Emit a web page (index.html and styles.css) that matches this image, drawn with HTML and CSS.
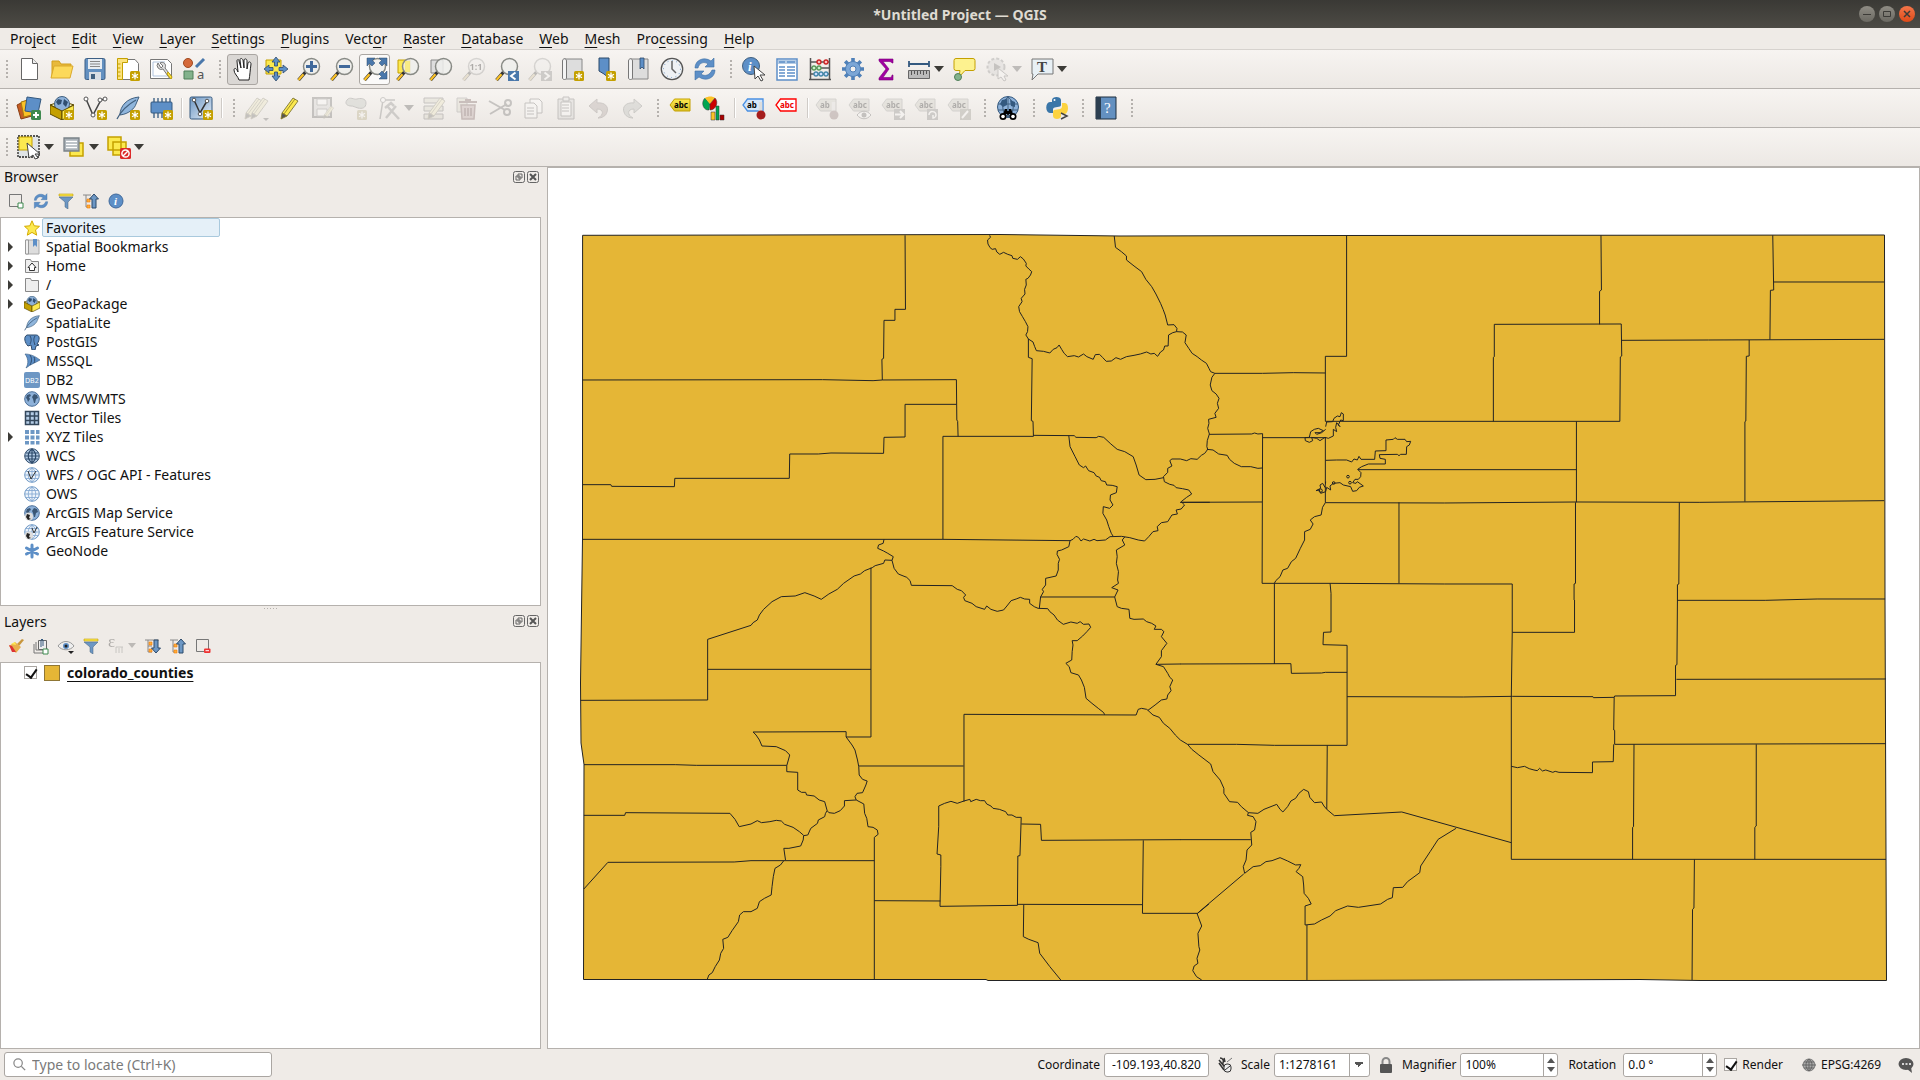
FILE: index.html
```html
<!DOCTYPE html>
<html lang="en">
<head>
<meta charset="utf-8">
<title>*Untitled Project — QGIS</title>
<link rel="stylesheet" href="styles.css">
</head>
<body>
<svg class="defs" aria-hidden="true">
  <defs>
    <linearGradient id="g-blue" x1="0" y1="0" x2="1" y2="1"><stop offset="0" stop-color="#6d97c4"/><stop offset="1" stop-color="#e4edf6"/></linearGradient>
    <linearGradient id="g-tag" x1="0" y1="0" x2="0" y2="1"><stop offset="0" stop-color="#fce94f"/><stop offset="1" stop-color="#d9c22a"/></linearGradient>
  </defs>
  <symbol id="new" viewBox="0 0 10 10"><rect width="10" height="10" rx="1.5" fill="#c4a000"/><path d="M5 1.5v7M2 3.2l6 3.6M8 3.2L2 6.8" stroke="#fff" stroke-width="1.3"/></symbol>
  <symbol id="lens" viewBox="0 0 24 24"><path d="M1.500 23l7-8" stroke="#333" stroke-width="3.400"/><path d="M1.500 23l5-5.700" stroke="#fcc226" stroke-width="2.200"/><circle cx="14.500" cy="9.500" r="8" fill="#eeeeec" fill-opacity=".85" stroke="#888a85" stroke-width="1.500"/></symbol>
  <symbol id="sync" viewBox="0 0 24 24"><path d="M2 11C2 3 11-1 18 4l3-3v9h-9l3-3C11 4 6 6 5 11zM22 13c0 8-9 12-16 7l-4 3v-9h9l-3 3c4 3 9 1 11-4z" fill="#5d8fc7" stroke="#3c6ea5" stroke-width=".6"/></symbol>
  <symbol id="pencil" viewBox="0 0 24 24"><path d="M15 2l5 3L9 20l-5-3z" fill="#fce94f" stroke="#888040"/><path d="M17 3L6 18M4 17l-1 6 6-3z" fill="#555" stroke="#8a7a20" stroke-width=".8"/></symbol>
  <symbol id="tag" viewBox="0 0 24 24"><path d="M5.500 3H21v12H5.500L1 9z"/></symbol>
  <symbol id="globe" viewBox="0 0 16 16"><circle cx="8" cy="8" r="7.300" fill="#8db1d9" stroke="#4b6f99"/><path d="M3 4l3-1 1 2-2 1 1 2-2 3-1-3-1-1zM10 3l3 1 1 3-2 1-1 4-1 0-1-4-1-2z" fill="#3a5674"/></symbol>
  <symbol id="grid-globe" viewBox="0 0 16 16"><circle cx="8" cy="8" r="7.300" fill="#edf4fb" stroke="#6d97c4"/><path d="M1 8h14M8 1v14M2 4.500h12M2 11.500h12M8 1C3 4 3 12 8 15M8 1c5 3 5 11 0 14" fill="none" stroke="#7fa5d0" stroke-width=".8"/></symbol>
  <symbol id="feather" viewBox="0 0 24 24"><path d="M23 1C11 2 4 10 4 19c9-1 15-7 16-11z" fill="#8fb5dc" stroke="#41607f"/><path d="M1 23C5 15 11 9 20 4" fill="none" stroke="#41607f" stroke-width="1.300"/></symbol>
  <symbol id="box" viewBox="0 0 24 24"><path d="M0 9l12-4 12 4-12 5z" fill="#fdf6b8" stroke="#5c4a00"/><circle cx="12" cy="8" r="7.500" fill="#8db1d9" stroke="#41607f"/><path d="M8 3l4 1-1 4-3 1-2-3zM14 3l4 3-2 5-3-3z" fill="#304f70"/><path d="M0 9l12 6v9L0 18z" fill="#c4a000" stroke="#5c4a00"/><path d="M24 9l-12 6v9l12-6z" fill="#fce94f" stroke="#5c4a00"/></symbol>
  <symbol id="funnel" viewBox="0 0 16 16"><path d="M1 1h14v2H1z" fill="#fce94f" stroke="#c4a000" stroke-width=".6"/><path d="M1 4h14l-5 5v7l-3-2V9z" fill="#6d97c4" stroke="#41607f" stroke-width=".5"/></symbol>
  <symbol id="tree-up" viewBox="0 0 16 16"><path d="M0 2h8M3 2v12h4M3 8h4" fill="none" stroke="#888"/><path d="M4 6h3v3H4zM4 12h3v3H4z" fill="#fcaf3e" stroke="#f57900" stroke-width=".6"/><path d="M11 1l4.500 5H13v9H9V6H6.500z" fill="#6d97c4" stroke="#2d4a6b"/></symbol>
  <symbol id="tree-down" viewBox="0 0 16 16"><path d="M0 2h14M3 2v12h4M3 8h4" fill="none" stroke="#888"/><path d="M4 4h3v3H4zM4 11h3v3H4z" fill="#fcaf3e" stroke="#f57900" stroke-width=".6"/><path d="M11 15l4.500-5H13V2H9v8H6.500z" fill="#6d97c4" stroke="#2d4a6b"/></symbol>
  <symbol id="float" viewBox="0 0 12 12"><rect x=".5" y=".5" width="11" height="11" rx="2" fill="none" stroke="#666"/><path d="M5 3h4v4H5zM3 5h4v4H3z" fill="#efebe7" stroke="#666"/></symbol>
  <symbol id="close" viewBox="0 0 12 12"><rect x=".5" y=".5" width="11" height="11" rx="2" fill="none" stroke="#666"/><path d="M3 3l6 6M9 3l-6 6" stroke="#555" stroke-width="2"/></symbol>
</svg>

<header class="titlebar">
  <h1>*Untitled Project — QGIS</h1>
  <div class="window-buttons">
    <button type="button" aria-label="Minimize"><svg viewBox="0 0 16 16"><path d="M4 8.500h8" stroke="#3c3b37"/></svg></button>
    <button type="button" aria-label="Maximize"><svg viewBox="0 0 16 16"><path d="M4.500 5.500h7v5h-7z" fill="none" stroke="#3c3b37"/></svg></button>
    <button type="button" class="quit" aria-label="Close"><svg viewBox="0 0 16 16"><path d="M5 5l6 6M11 5l-6 6" stroke="#3c3b37" stroke-width="1.500"/></svg></button>
  </div>
</header>

<nav class="menubar">
  <button type="button">Pro<u>j</u>ect</button><button type="button"><u>E</u>dit</button><button type="button"><u>V</u>iew</button><button type="button"><u>L</u>ayer</button><button type="button"><u>S</u>ettings</button><button type="button"><u>P</u>lugins</button><button type="button">Vect<u>o</u>r</button><button type="button"><u>R</u>aster</button><button type="button"><u>D</u>atabase</button><button type="button"><u>W</u>eb</button><button type="button"><u>M</u>esh</button><button type="button">Pro<u>c</u>essing</button><button type="button"><u>H</u>elp</button>
</nav>

<div class="toolbar" role="toolbar" aria-label="Project and navigation">
  <i class="handle"></i>
  <button type="button" aria-label="New project"><svg viewBox="0 0 24 24"><path d="M4.500 1.500h11l5 5v16h-16z" fill="#fff" stroke="#666"/><path d="M15.500 1.500v5h5" fill="#eee" stroke="#666"/></svg></button>
  <button type="button" aria-label="Open project"><svg viewBox="0 0 24 24"><path d="M2 21V4h7l2 3h10v3" fill="#e8b93b" stroke="#d19f1c"/><path d="M4 9h19l-3 12H1z" fill="#fcd95a" stroke="#dba92a"/></svg></button>
  <button type="button" aria-label="Save project"><svg viewBox="0 0 24 24"><rect x="2" y="1.500" width="20" height="21" rx="1.500" fill="#6390c0" stroke="#3d5f85"/><path d="M5 2h14v10H5z" fill="#e8edf2"/><path d="M7 4.500h10M7 7h10M7 9.500h10" stroke="#888"/><path d="M6 15h12v8H6z" fill="#d9dee4"/><path d="M8 17h4v5H8z" fill="#41607f"/></svg></button>
  <button type="button" aria-label="New print layout"><svg viewBox="0 0 24 24"><path d="M6 2.500h13l3.500 4v16H6z" fill="#fff" stroke="#777"/><path d="M1.500 1.500h10v4h-5v17h-5z" fill="#fce27c" stroke="#c4a000"/><path d="M1.500 7h3M1.500 11h3M1.500 15h3M1.500 19h3" stroke="#c4a000"/><use href="#new" x="14" y="14" width="10" height="10"/></svg></button>
  <button type="button" aria-label="Layout manager"><svg viewBox="0 0 24 24"><path d="M1.500 2.500h17l4 4v15h-21z" fill="#fff" stroke="#777"/><path d="M4 5h12M4 5v14h14" fill="none" stroke="#b0c4de"/><path d="M9 6a4 4 0 0 0 5 6l7 10 2-2-7-9c2-4-2-7-5-5l3 3-2 2z" fill="#ddd" stroke="#777"/><path d="M18 17l4 5 1-2-4-5z" fill="#fce94f" stroke="#c4a000"/></svg></button>
  <button type="button" aria-label="Style manager"><svg viewBox="0 0 24 24"><circle cx="6" cy="6" r="4.500" fill="#d5693a" stroke="#a04a20"/><path d="M14 10l8-8" stroke="#4a78ab" stroke-width="3"/><path d="M2 14h9v8H2z" fill="#83b28c" stroke="#4f7f58"/><text x="15" y="22" font-size="13" fill="#555">a</text></svg></button>
  <i class="handle"></i>
  <button type="button" class="pressed" aria-label="Pan map"><svg viewBox="0 0 24 24"><path d="M8 23c-1-4-5-6-5-10 0-2 2-2 3 0l1 2L6 4c0-2 2-2 2 0l2 7-1-8c0-2 2-2 3 0l1 8 0-8c1-2 3-1 3 1v8l1-6c1-2 3-1 3 1-1 7-1 11-2 16z" fill="#fff" stroke="#222"/></svg></button>
  <button type="button" aria-label="Pan to selection"><svg viewBox="0 0 24 24"><path d="M2 3h15v14H2z" fill="#fce94f" stroke="#c4a000"/><path d="M12 0l4 5h-2.500v4h-3V5H8zM12 24l4-5h-2.500v-4h-3v4H8zM0 12l5-4v2.500h4v3H5V16zM24 12l-5-4v2.500h-4v3h4V16z" fill="#5d8fc7" stroke="#2d4a6b" stroke-width=".8"/></svg></button>
  <button type="button" aria-label="Zoom in"><svg viewBox="0 0 24 24"><use href="#lens"/><path d="M14.500 4v11M9 9.500h11" stroke="#41699b" stroke-width="3"/></svg></button>
  <button type="button" aria-label="Zoom out"><svg viewBox="0 0 24 24"><use href="#lens"/><path d="M9 9.500h11" stroke="#41699b" stroke-width="3"/></svg></button>
  <button type="button" class="framed" aria-label="Zoom full"><svg viewBox="0 0 24 24"><use href="#lens"/><path d="M4 1h8L9.500 3.500 12 6l-3 3-2.500-2.500L4 9zM24 1h-8l2.500 2.500L16 6l3 3 2.500-2.500L24 9zM24 22h-8l2.500-2.500L16 17l3-3 2.500 2.500L24 14z" fill="#4a78ab" stroke="#2d4a6b" stroke-width=".5"/></svg></button>
  <button type="button" aria-label="Zoom to selection"><svg viewBox="0 0 24 24"><path d="M2 3h12v13H2z" fill="#fce94f" stroke="#c4a000"/><use href="#lens"/><path d="M9 4h5v11H9z" fill="#fce94f" opacity=".6"/></svg></button>
  <button type="button" aria-label="Zoom to layer"><svg viewBox="0 0 24 24"><path d="M2 3h12v13H2z" fill="#ddd" stroke="#888"/><use href="#lens"/></svg></button>
  <button type="button" disabled aria-label="Zoom native"><svg viewBox="0 0 24 24"><use href="#lens"/><text x="7.500" y="13" font-size="9" font-weight="700">1:1</text></svg></button>
  <button type="button" aria-label="Zoom last"><svg viewBox="0 0 24 24"><use href="#lens"/><path d="M13 14h11v10H13z" fill="#4a78ab"/><path d="M20.500 15.500L16 19l4.500 3.500" stroke="#fff" stroke-width="2" fill="none"/></svg></button>
  <button type="button" disabled aria-label="Zoom next"><svg viewBox="0 0 24 24"><use href="#lens"/><path d="M13 14h11v10H13z" fill="#777"/><path d="M16.500 15.500L21 19l-4.500 3.500" stroke="#fff" stroke-width="2" fill="none"/></svg></button>
  <button type="button" aria-label="New map view"><svg viewBox="0 0 24 24"><path d="M3 2h18v20H5" fill="#ddd" stroke="#888"/><path d="M1.500 4c0-3 4-3 4 0v17c0 2-4 2-4 0z" fill="#f4f4f4" stroke="#777"/><use href="#new" x="13" y="14" width="10" height="10"/></svg></button>
  <button type="button" aria-label="New bookmark"><svg viewBox="0 0 24 24"><path d="M5 1h10v20l-5-4-5-3z" fill="#5d8fc7" stroke="#2d4a6b"/><use href="#new" x="12" y="14" width="10" height="10"/></svg></button>
  <button type="button" aria-label="Show bookmarks"><svg viewBox="0 0 24 24"><path d="M3 2h18v20H5" fill="#ddd" stroke="#888"/><path d="M1.500 4c0-3 4-3 4 0v17c0 2-4 2-4 0z" fill="#f4f4f4" stroke="#777"/><path d="M13 1h4v11l-2-2-2 2z" fill="#5d8fc7" stroke="#2d4a6b" stroke-width=".8"/></svg></button>
  <button type="button" aria-label="Temporal controller"><svg viewBox="0 0 24 24"><circle cx="12" cy="12" r="10.700" fill="#eef1f4" stroke="#555" stroke-width="1.300"/><circle cx="12" cy="12" r="8.500" fill="none" stroke="#6d97c4" stroke-dasharray="1 3.400"/><path d="M12 4v8l4 4" fill="none" stroke="#666" stroke-width="1.500"/></svg></button>
  <button type="button" aria-label="Refresh"><svg viewBox="0 0 24 24"><use href="#sync"/></svg></button>
  <i class="handle"></i>
  <button type="button" aria-label="Identify"><svg viewBox="0 0 24 24"><circle cx="9" cy="9" r="8.500" fill="#5d8fc7" stroke="#41607f"/><text x="6" y="14" font-size="13" font-weight="700" font-style="italic" class="serif" fill="#fff">i</text><path d="M12 9l11 9-5 0 3 5-2 1-3-5-3 3z" fill="#fff" stroke="#444"/></svg></button>
  <button type="button" aria-label="Attribute table"><svg viewBox="0 0 24 24"><path d="M2 2h20v21H2z" fill="#fff" stroke="#5d8fc7" stroke-width="1.500"/><path d="M3 3h18v4H3z" fill="#b4cce6"/><path d="M4 10h6M12 10h8M4 13h6M12 13h8M4 16h6M12 16h8M4 19h6M12 19h8M4 5h6M12 5h8" stroke="#5d8fc7" stroke-width="1.500"/></svg></button>
  <button type="button" aria-label="Field calculator"><svg viewBox="0 0 24 24"><path d="M2.500 1v22M21.500 1v22M1 22.500h22M2 5h20M2 11h20M2 17h20" stroke="#555" stroke-width="1.500"/><g stroke-width="1.300"><g fill="#fbb" stroke="#c22"><circle cx="11" cy="5" r="2"/><circle cx="18" cy="5" r="2"/></g><g fill="#cec" stroke="#5a9a5a"><circle cx="6" cy="11" r="2"/><circle cx="11" cy="11" r="2"/></g><g fill="#cdf" stroke="#48a"><circle cx="8" cy="17" r="2"/><circle cx="13" cy="17" r="2"/><circle cx="18" cy="17" r="2"/></g></g></svg></button>
  <button type="button" aria-label="Toolbox"><svg viewBox="0 0 24 24"><path d="M12 1v22M1 12h22M4.200 4.200l15.600 15.600M19.800 4.200L4.200 19.800" stroke="#4f80b8" stroke-width="3.600"/><circle cx="12" cy="12" r="7.500" fill="#7ba6d6" stroke="#4f80b8"/><circle cx="12" cy="12" r="3" fill="#f4f1ee" stroke="#4f80b8"/></svg></button>
  <button type="button" aria-label="Statistics"><svg viewBox="0 0 24 24"><path d="M19 6V2H5v2l7 8-7 9v2h14v-5h-1c0 2-1 2.500-3 2.500H9l6-8.500-6-7.500h6c2 0 2.500 1 3 1.500z" fill="#a000a0" stroke="#7a007a" stroke-width=".6"/></svg></button>
  <button type="button" class="split" aria-label="Measure"><svg viewBox="0 0 24 24"><path d="M2 7h20M2 4v6M22 4v6" stroke="#34597f" stroke-width="1.800"/><path d="M1.500 13.500h21v8h-21z" fill="#bbb" stroke="#666"/><path d="M4.500 14v4M7.500 14v3M10.500 14v4M13.500 14v3M16.500 14v4M19.500 14v3" stroke="#555"/></svg><i class="arrow"></i></button>
  <button type="button" aria-label="Map tips"><svg viewBox="0 0 24 24"><path d="M4 1.500h17q2 0 2 2v8q0 2-2 2h-8L7 20l1-6.500H4q-2 0-2-2v-8q0-2 2-2z" fill="#fdf28f" stroke="#c4a000"/><circle cx="6" cy="20" r="3.500" fill="#83b28c" stroke="#4f7f58"/></svg></button>
  <button type="button" class="split" disabled aria-label="Run action"><svg viewBox="0 0 24 24"><circle cx="11" cy="10" r="8.500" fill="#ccc" stroke="#777" stroke-width="2" stroke-dasharray="3 2"/><path d="M9 6l7 4-7 4z" fill="#555"/><path d="M13 11l10 8h-4l2 4-2 1-3-4-3 2z" fill="#fff" stroke="#666"/></svg><i class="arrow"></i></button>
  <button type="button" class="split" aria-label="Text annotation"><svg viewBox="0 0 24 24"><path d="M2 2h21v15H8l-6 6 1-6H2z" fill="#e8f0f5" stroke="#777"/><text x="7" y="15" font-size="15" font-weight="700" class="serif" fill="#444">T</text></svg><i class="arrow"></i></button>
</div>

<div class="toolbar" role="toolbar" aria-label="Data sources and editing">
  <i class="handle"></i>
  <button type="button" aria-label="Data source manager"><svg viewBox="0 0 24 24"><path d="M0 9l10-5 5 16-11 3z" fill="#c65d22" stroke="#8a3d12"/><path d="M4 6l11-3 3 15-11 3z" fill="#fcc226" stroke="#a87c10"/><path d="M10 1l14 2-3 14-13-2z" fill="#5d8fc7" stroke="#34597f"/><rect x="14" y="14" width="10" height="10" rx="1.500" fill="#3f8a4f"/><path d="M19 16v6M16 19h6" stroke="#fff" stroke-width="2"/></svg></button>
  <button type="button" aria-label="New GeoPackage"><svg viewBox="0 0 24 24"><use href="#box"/><use href="#new" x="14" y="14" width="10" height="10"/></svg></button>
  <button type="button" aria-label="New shapefile"><svg viewBox="0 0 24 24"><path d="M3 3l7 16L18 4l4-1" fill="none" stroke="#444" stroke-width="1.500"/><g fill="#fff" stroke="#555"><circle cx="3" cy="3" r="2"/><circle cx="10" cy="19" r="2"/><circle cx="17" cy="4" r="2"/><circle cx="22" cy="3" r="2"/></g><use href="#new" x="14" y="14" width="10" height="10"/></svg></button>
  <button type="button" aria-label="New SpatiaLite"><svg viewBox="0 0 24 24"><use href="#feather"/><use href="#new" x="14" y="14" width="10" height="10"/></svg></button>
  <button type="button" aria-label="New memory layer"><svg viewBox="0 0 24 24"><path d="M5 2v20M9 2v20M13 2v20M17 2v20M21 2v10" stroke="#34597f" stroke-width="1.300"/><rect x="2" y="6" width="21" height="11" rx="1" fill="#5d8fc7" stroke="#34597f"/><use href="#new" x="14" y="14" width="10" height="10"/></svg></button>
  <i class="sep"></i>
  <button type="button" aria-label="New virtual layer"><svg viewBox="0 0 24 24"><rect x="1" y="1" width="22" height="22" rx="1.500" fill="url(#g-blue)" stroke="#34597f"/><path d="M5 4l6 13 7-12" fill="none" stroke="#333" stroke-width="1.500"/><g fill="#fff" stroke="#555"><circle cx="5" cy="4" r="1.800"/><circle cx="11" cy="18" r="1.800"/><circle cx="18" cy="5" r="1.800"/></g><use href="#new" x="14" y="14" width="10" height="10"/></svg></button>
  <i class="sep"></i>
  <i class="handle"></i>
  <button type="button" disabled aria-label="Current edits"><svg viewBox="0 0 24 24"><use href="#pencil" x="-3" width="24" height="24"/><use href="#pencil" x="3" width="24" height="24"/><path d="M18 22h6l-3 3z" fill="#555"/></svg></button>
  <button type="button" aria-label="Toggle editing"><svg viewBox="0 0 24 24"><use href="#pencil"/></svg></button>
  <button type="button" disabled aria-label="Save edits"><svg viewBox="0 0 24 24"><path d="M2 2h18v19H2z" fill="#ccc" stroke="#555" stroke-width="2"/><path d="M6 3h10v6H6zM6 13h10v7H6z" fill="#fff" stroke="#777"/><use href="#pencil" x="11" y="9" width="14" height="14"/></svg></button>
  <button type="button" disabled aria-label="Add feature"><svg viewBox="0 0 24 24"><path d="M3 4c3-4 7 0 10-1s9-1 9 4-4 6-8 5-4-2-7-2-7-2-4-6z" fill="#a8bfa8" stroke="#666"/><use href="#new" x="13" y="14" width="10" height="10"/></svg></button>
  <button type="button" class="split" disabled aria-label="Vertex tool"><svg viewBox="0 0 24 24"><path d="M3 23L6 4h12M6 4l-3 0" fill="none" stroke="#666" stroke-width="1.500"/><circle cx="6" cy="4" r="2.500" fill="#fff" stroke="#666"/><path d="M9 22L19 10M10 10l12 13M8 12l6-5 3 3" stroke="#777" stroke-width="2.500" fill="none"/></svg><i class="arrow"></i></button>
  <button type="button" disabled aria-label="Modify attributes"><svg viewBox="0 0 24 24"><path d="M2 2h19v5H2zM2 10h19v5H2zM2 18h19v5H2z" fill="#d8d4a0" stroke="#555"/><use href="#pencil" x="3" width="24" height="24"/></svg></button>
  <button type="button" disabled aria-label="Delete selected"><svg viewBox="0 0 24 24"><path d="M2 2h10v14H2z" fill="#d8d4a0" stroke="#777"/><path d="M6 9h14l-1 14H7z" fill="#d88" stroke="#933" stroke-width="1.500"/><path d="M4 6h18M10 4h6M10 12v8M13 12v8M16 12v8" stroke="#933" stroke-width="2"/></svg></button>
  <button type="button" disabled aria-label="Cut"><svg viewBox="0 0 24 24"><path d="M1 5l16 9M2 18l17-10" stroke="#555" stroke-width="2"/><circle cx="20" cy="7" r="3" fill="none" stroke="#555" stroke-width="2"/><circle cx="19" cy="16" r="3" fill="none" stroke="#555" stroke-width="2"/></svg></button>
  <button type="button" disabled aria-label="Copy"><svg viewBox="0 0 24 24"><path d="M9 3h9l3 3v11H9z" fill="#fff" stroke="#555"/><path d="M4 7h9l3 3v12H4z" fill="#fff" stroke="#555"/><path d="M6 12h7M6 15h7M6 18h7" stroke="#555"/></svg></button>
  <button type="button" disabled aria-label="Paste"><svg viewBox="0 0 24 24"><path d="M4 3h16v20H4z" fill="#ccc" stroke="#555"/><path d="M7 6h10v14H7z" fill="#fff" stroke="#555"/><path d="M9 1h6v4H9z" fill="#ddd" stroke="#555"/><path d="M8 9h7M8 12h7M8 15h7" stroke="#555"/></svg></button>
  <button type="button" disabled aria-label="Undo"><svg viewBox="0 0 24 24"><path d="M2 10l8-7v4c8-1 12 4 10 9-1 4-5 6-9 6 6-3 6-9-1-9v4z" fill="#b78c82" stroke="#7b6660"/></svg></button>
  <button type="button" disabled aria-label="Redo"><svg viewBox="0 0 24 24"><path d="M22 10l-8-7v4C6 6 2 11 4 16c1 4 5 6 9 6-6-3-6-9 1-9v4z" fill="#a5b3a5" stroke="#667066"/></svg></button>
  <i class="handle"></i>
  <button type="button" aria-label="Layer labeling"><svg viewBox="0 0 24 24"><use href="#tag" fill="url(#g-tag)" stroke="#c4a000"/><text x="5" y="12" font-size="8" font-weight="700">abc</text></svg></button>
  <button type="button" aria-label="Layer diagrams"><svg viewBox="0 0 24 24"><path d="M8 8L3 2c-5 5-1 13 4 12z" fill="#00a651" stroke="#333" stroke-width=".5"/><path d="M8 8L3 2c3-2 8-2 10 0z" fill="#fcc226"/><path d="M8 8l5-6c4 4 1 12-5 12z" fill="#c00" stroke="#333" stroke-width=".5"/><path d="M9 16h4v8H9z" fill="#fcc226" stroke="#333" stroke-width=".5"/><path d="M14 10h3v14h-3z" fill="#00a651" stroke="#333" stroke-width=".5"/><path d="M18 19h4v5h-4z" fill="#a00" stroke="#333" stroke-width=".5"/></svg></button>
  <i class="sep"></i>
  <button type="button" aria-label="Highlight pinned labels"><svg viewBox="0 0 24 24"><use href="#tag" fill="#d5e6fa" stroke="#4a90e2" stroke-width="1.300"/><text x="5" y="12" font-size="8" font-weight="700">ab</text><path d="M18.500 6v12" stroke="#ddd" stroke-width="3.500"/><circle cx="19" cy="19" r="4.500" fill="#a51d1d"/></svg></button>
  <button type="button" aria-label="Unplaced labels"><svg viewBox="0 0 24 24"><use href="#tag" fill="#fff" stroke="#f00" stroke-width="1.300"/><text x="5" y="12" font-size="8" font-weight="700" fill="#e00">abc</text></svg></button>
  <i class="sep"></i>
  <button type="button" disabled aria-label="Pin labels"><svg viewBox="0 0 24 24"><use href="#tag" fill="#c8c4a0" stroke="#888"/><text x="5" y="12" font-size="8" font-weight="700">ab</text><path d="M18.500 6v12" stroke="#ddd" stroke-width="3.500"/><circle cx="19" cy="19" r="4.500" fill="#a55"/></svg></button>
  <button type="button" disabled aria-label="Show labels"><svg viewBox="0 0 24 24"><use href="#tag" fill="#c8c4a0" stroke="#888"/><text x="5" y="12" font-size="8" font-weight="700">abc</text><path d="M9 19c4-5 10-5 14 0-4 5-10 5-14 0z" fill="#fff" stroke="#555"/><circle cx="16" cy="19" r="2.500" fill="#555"/></svg></button>
  <button type="button" disabled aria-label="Move label"><svg viewBox="0 0 24 24"><use href="#tag" fill="#c8c4a0" stroke="#888"/><text x="5" y="12" font-size="8" font-weight="700">abc</text><path d="M13 13h11v11H13z" fill="#777"/><path d="M14 18.500h8M19 15l3.500 3.500L19 22" stroke="#fff" stroke-width="2" fill="none"/></svg></button>
  <button type="button" disabled aria-label="Rotate label"><svg viewBox="0 0 24 24"><use href="#tag" fill="#c8c4a0" stroke="#888"/><text x="5" y="12" font-size="8" font-weight="700">abc</text><path d="M13 13h11v11H13z" fill="#777"/><path d="M15 19c0-5 7-4 7 0 0 2-2 3-3 3v-3" stroke="#fff" stroke-width="1.500" fill="none"/></svg></button>
  <button type="button" disabled aria-label="Change label"><svg viewBox="0 0 24 24"><use href="#tag" fill="#c8c4a0" stroke="#888"/><text x="5" y="12" font-size="8" font-weight="700">abc</text><path d="M13 13h11v11H13z" fill="#8a8560"/><path d="M15 22l6-7" stroke="#fff" stroke-width="2"/></svg></button>
  <i class="handle"></i>
  <button type="button" aria-label="Metasearch"><svg viewBox="0 0 24 24"><circle cx="12" cy="11" r="10.500" fill="#8db1d9" stroke="#34597f"/><path d="M2 8h20M2 14h20M12 1v20M12 1C5 6 5 16 12 21M12 1c7 5 7 15 0 20" fill="none" stroke="#41607f"/><path d="M6 4l5-1 0 6-4 2-3-3zM14 4l5 2 0 5-4-1z" fill="#34597f"/><path d="M9 13h2v2h2v-2h2l2 5h-4l-1 2-1-2H7z"/><circle cx="7" cy="20.500" r="3.500"/><circle cx="17" cy="20.500" r="3.500"/><circle cx="7" cy="20.500" r="1.800" fill="#fff"/><circle cx="17" cy="20.500" r="1.800" fill="#fff"/></svg></button>
  <i class="handle"></i>
  <button type="button" aria-label="Python console"><svg viewBox="0 0 24 24"><path d="M7 6V4c0-4 9-4 9 0v5c0 3-7 1-8 4v4H5c-5 0-5-11 0-11h6" fill="#3a76a8"/><circle cx="9.500" cy="4" r="1" fill="#fff"/><path d="M17 7h3c4 0 4 10 0 11h-4v2c0 4-8 4-8 0v-4c0-4 8-1 9-5z" fill="#fcd340"/><path d="M16 17l6 3-6 3" fill="none" stroke="#444" stroke-width="1.500"/></svg></button>
  <i class="handle"></i>
  <button type="button" aria-label="Help contents"><svg viewBox="0 0 24 24"><path d="M2 1h20v22H2z" fill="#6390c0" stroke="#1d2c3c"/><path d="M2 1h5v22H2z" fill="#2c3e50"/><text x="10" y="17" font-size="15" class="serif" fill="#fff">?</text></svg></button>
  <i class="handle"></i>
</div>

<div class="toolbar" role="toolbar" aria-label="Selection">
  <i class="handle"></i>
  <button type="button" class="split" aria-label="Select features"><svg viewBox="0 0 24 24"><path d="M1 1h21v21H1z" fill="#e0e4e6" stroke="#222" stroke-width="1.300" stroke-dasharray="2 1"/><path d="M2 2h13v13H2z" fill="#fce94f" stroke="#c4a000"/><path d="M10 8l13 11h-5l3 4-3 1-2-4-4 3z" fill="#fff" stroke="#444"/></svg><i class="arrow"></i></button>
  <button type="button" class="split" aria-label="Select by value"><svg viewBox="0 0 24 24"><path d="M8 8h13v13H8z" fill="#fce94f" stroke="#c4a000" stroke-width="1.500"/><path d="M2 3h15v13H2z" fill="#aab2b8" stroke="#7a8288" stroke-width="1.300"/><path d="M4 6.500h11M4 9.500h11M4 12.500h11" stroke="#fff" stroke-width="1.500"/></svg><i class="arrow"></i></button>
  <button type="button" class="split" aria-label="Deselect"><svg viewBox="0 0 24 24"><path d="M1 2h13v13H1zM6 7h13v13H6z" fill="#fce94f" stroke="#c4a000" stroke-width="1.500"/><rect x="13" y="13" width="11" height="11" rx="1.500" fill="#dc2a2a"/><circle cx="18.500" cy="18.500" r="3.600" fill="none" stroke="#fff" stroke-width="1.500"/><path d="M16 21l5-5" stroke="#fff" stroke-width="1.500"/></svg><i class="arrow"></i></button>
</div>

<main class="workspace">
  <aside class="panels">
    <section class="panel browser">
      <header class="panel-title"><h2>Browser</h2><button type="button" aria-label="Float Browser"><svg><use href="#float"/></svg></button><button type="button" aria-label="Close Browser"><svg><use href="#close"/></svg></button></header>
      <div class="panel-tools">
        <button type="button" aria-label="Add layer"><svg viewBox="0 0 16 16"><path d="M1.500 1.500h12v12h-12z" fill="#efebe7" stroke="#777"/><path d="M10 10h5v5h-5z" fill="#fff" stroke="#3f8a4f"/></svg></button>
        <button type="button" aria-label="Refresh"><svg><use href="#sync"/></svg></button>
        <button type="button" aria-label="Filter"><svg><use href="#funnel"/></svg></button>
        <button type="button" aria-label="Collapse all"><svg><use href="#tree-up"/></svg></button>
        <button type="button" aria-label="Properties"><svg viewBox="0 0 16 16"><circle cx="8" cy="8" r="7" fill="#5d8fc7" stroke="#41699b"/><text x="6" y="12" font-size="11" font-weight="700" font-style="italic" class="serif" fill="#fff">i</text></svg></button>
      </div>
      <ul class="tree">
        <li class="current"><svg viewBox="0 0 16 16"><path d="M8 .8l2.200 5 5.300.5-4 3.600 1.200 5.300L8 12.400l-4.700 2.800 1.200-5.300-4-3.600 5.300-.5z" fill="#fce94f" stroke="#d4aa00"/></svg><span>Favorites</span></li>
        <li class="branch"><svg viewBox="0 0 16 16"><path d="M2 1h13v14H2z" fill="#ddd" stroke="#aaa"/><path d="M1.500 1h3v14h-3z" fill="#f0f0f0" stroke="#999"/><path d="M9 0h4v8l-2-2-2 2z" fill="#5d8fc7"/></svg><span>Spatial Bookmarks</span></li>
        <li class="branch"><svg viewBox="0 0 16 16"><path d="M1.500 14.500v-13h5l1 2h7v11z" fill="#eee" stroke="#888"/><path d="M4 9.500L8 5l4 4.500h-1.500v3h-5v-3z" fill="#fff" stroke="#333"/></svg><span>Home</span></li>
        <li class="branch"><svg viewBox="0 0 16 16"><path d="M1.500 14.500v-13h5l1 2h7v11z" fill="#eee" stroke="#888"/></svg><span>/</span></li>
        <li class="branch"><svg><use href="#box"/></svg><span>GeoPackage</span></li>
        <li><svg><use href="#feather"/></svg><span>SpatiaLite</span></li>
        <li><svg viewBox="0 0 16 16"><path d="M3 1h9c4 0 4 5 1 9l2 1-3 1-1 4H8l-1-5-3 1C1 9-1 3 3 1z" fill="#5d8fc7" stroke="#2d4a6b"/><path d="M6 2c2 3 1 6 0 8M11 2c-2 3-1 6 0 9" stroke="#2d4a6b" fill="none"/></svg><span>PostGIS</span></li>
        <li><svg viewBox="0 0 16 16"><path d="M1 1c5 0 10 2 15 6-5 3-9 4-14 8 3-5 2-10-1-14z" fill="#5d8fc7" stroke="#34597f" stroke-width=".6"/><path d="M6 2c2 3 2 6 0 10M10 4c1 2 1 4 0 6" stroke="#2d4a6b" fill="none"/></svg><span>MSSQL</span></li>
        <li><svg viewBox="0 0 16 16"><rect width="16" height="16" rx="2" fill="#6d97c4"/><text x="1" y="10.500" font-size="7" fill="#fff">DB2</text></svg><span>DB2</span></li>
        <li><svg><use href="#globe"/></svg><span>WMS/WMTS</span></li>
        <li><svg viewBox="0 0 16 16"><path d="M1.500 1.500h13v13h-13z" fill="#b4cce6" stroke="#34485c" stroke-width="1.500"/><path d="M6 1v14M10.500 1v14M1 6h14M1 10.500h14" stroke="#34485c" stroke-width="1.500"/></svg><span>Vector Tiles</span></li>
        <li class="branch"><svg viewBox="0 0 16 16"><path d="M1 1h4v4H1zM6.500 1h4v4h-4zM12 1h3.500v4H12zM1 6.500h4v4H1zM6.500 6.500h4v4h-4zM12 6.500h3.500v4H12zM1 12h4v3.500H1zM6.500 12h4v3.500h-4zM12 12h3.500v3.500H12z" fill="#6d97c4"/></svg><span>XYZ Tiles</span></li>
        <li><svg viewBox="0 0 16 16"><circle cx="8" cy="8" r="7.300" fill="#b4cce6" stroke="#2d4a6b"/><path d="M1 8h14M2 5h12M2 11h12M8 1v14M8 1C3 5 3 11 8 15M8 1c5 4 5 10 0 14" fill="none" stroke="#2d4a6b" stroke-width="1.200"/></svg><span>WCS</span></li>
        <li><svg viewBox="0 0 16 16"><use href="#grid-globe"/><path d="M4 4l3 8 5-8" fill="none" stroke="#333"/></svg><span>WFS / OGC API - Features</span></li>
        <li><svg><use href="#grid-globe"/></svg><span>OWS</span></li>
        <li><svg viewBox="0 0 16 16"><use href="#globe"/><circle cx="5" cy="11.500" r="4" fill="#ddd"/><path d="M3 9l3 1-1 3 2 1-3 1-2-3z" fill="#222"/></svg><span>ArcGIS Map Service</span></li>
        <li><svg viewBox="0 0 16 16"><use href="#grid-globe"/><path d="M8 4l2 5 3-6" fill="none" stroke="#333"/><circle cx="5" cy="11.500" r="4" fill="#ddd"/><path d="M3 9l3 1-1 3 2 1-3 1-2-3z" fill="#222"/></svg><span>ArcGIS Feature Service</span></li>
        <li><svg viewBox="0 0 16 16"><path d="M8 2v12M2.500 5l11 6M13.500 5l-11 6" stroke="#5d8fc7" stroke-width="3" stroke-linecap="round"/></svg><span>GeoNode</span></li>
      </ul>
    </section>
    <div class="splitter"></div>
    <section class="panel layers">
      <header class="panel-title"><h2>Layers</h2><button type="button" aria-label="Float Layers"><svg><use href="#float"/></svg></button><button type="button" aria-label="Close Layers"><svg><use href="#close"/></svg></button></header>
      <div class="panel-tools">
        <button type="button" aria-label="Layer styling"><svg viewBox="0 0 16 16"><path d="M9 6l5-5 2 1-5 6z" fill="#c8963c"/><path d="M1 8l6-4 6 5-5 6z" fill="#e9b04c"/><path d="M1 7l3 1 4 6-4 0z" fill="#d33"/><path d="M3 6l4-2 1 3z" fill="#fce94f"/></svg></button>
        <button type="button" aria-label="Add group"><svg viewBox="0 0 16 16"><path d="M1 6v9h9M3 4v8h8" stroke="#777" fill="none"/><path d="M5.500 2.500h8v9h-8z" fill="#eee" stroke="#666"/><path d="M8 9V2q1-2 2 0v6" stroke="#34597f" fill="none"/><path d="M10 11h5v5h-5z" fill="#fff" stroke="#3f8a4f"/></svg></button>
        <button type="button" aria-label="Map themes"><svg viewBox="0 0 16 16"><path d="M0 8c4-6 12-6 16 0-4 5-12 5-16 0z" fill="#eee" stroke="#999"/><circle cx="8" cy="8" r="3" fill="#5d8fc7"/><circle cx="8" cy="8" r="1.500" fill="#222"/><path d="M10 13h6l-3 3z" fill="#222"/></svg></button>
        <button type="button" aria-label="Filter legend"><svg><use href="#funnel"/></svg></button>
        <button type="button" disabled aria-label="Filter by expression"><svg viewBox="0 0 16 16"><text x="0" y="9" font-size="17" class="serif">ε</text><path d="M8 9h7M8 9v6M11 10v5M14 9v6" stroke="#666"/></svg><i class="arrow"></i></button>
        <button type="button" aria-label="Expand all"><svg><use href="#tree-down"/></svg></button>
        <button type="button" aria-label="Collapse all"><svg><use href="#tree-up"/></svg></button>
        <button type="button" aria-label="Remove layer"><svg viewBox="0 0 16 16"><path d="M1.500 1.500h12v12h-12z" fill="#efebe7" stroke="#777"/><rect x="9" y="10.500" width="6.500" height="4.500" rx="1" fill="#e33"/><path d="M10.500 12.700h3.500" stroke="#fff"/></svg></button>
      </div>
      <ul class="tree legend">
        <li><label><input type="checkbox" checked><i class="swatch"></i><strong>colorado_counties</strong></label></li>
      </ul>
    </section>
  </aside>
  <div class="column-splitter"></div>
  <section class="canvas" aria-label="Map canvas">
    <svg class="map" viewBox="548 168 1371 880" preserveAspectRatio="xMidYMid meet" role="img" aria-label="Counties of Colorado">
      <path class="state" d="M582.600 235.300L760 235 1000 234.500 1120 236 1340 235.500 1884.500 235 1885 600 1886.500 980.500 1700 980.500 1640 979.500 1300 980.500 988 980.500 986 979.500 583.500 979.500 584 764.500 581 743 580.500 683 582.500 539z"/>
      <g class="borders" transform="translate(570 220) scale(.42092 .33333)">
        <path d="M796 46L797 268 772 268 772 301 746 301 745 415 741 418 742 480"/>
        <path d="M30 480L600 479 720 482 742 480 918 479 919 600 921 604 922 649M918 553L796 553 796 651 746 652 745 700 620 699 590 702 522 702 521 775 249 775 248 800 99 799 97 794 30 794"/>
        <path d="M886 958L886 649 1101 649 1100 604 1096 602 1098 416 1089 412 1089 357M30 958L886 958 1188 962"/>
        <path d="M997 46L999 52 992 60 993 72 998 83 1003 88 1011 86 1014 96 1021 103 1030 97 1040 103 1050 107 1052 115 1063 118 1070 110 1077 117 1084 130 1083 138 1090 147 1097 155 1094 165 1088 175 1083 178 1084 195 1080 208 1081 222 1072 235 1074 245 1066 260 1068 275 1075 290 1082 305 1088 320 1087 335 1083 345 1089 357 1100 366 1104 380 1108 392 1125 394 1140 399 1148 388 1157 383 1162 375 1168 388 1174 400 1182 410 1198 407 1208 411 1220 402 1228 410 1243 418 1248 404 1258 403 1265 412 1274 424 1286 423 1297 413 1308 418 1322 410 1340 406 1355 402 1370 396 1380 402 1388 400 1396 409 1403 396 1410 390 1413 378 1421 378 1422 345 1432 338 1441 335 1455 336 1464 345 1461 368 1470 385 1478 400 1490 410 1500 420 1512 430 1518 445 1522 455 1532 460 1525 472 1521 495 1525 512 1535 522 1542 535 1538 550 1541 565 1532 580 1535 592 1517 598 1518 610 1515 625 1519 642 1514 662 1513 680 1515 688"/>
        <path d="M1293 48L1296 82 1310 95 1322 108 1322 120 1340 138 1358 155 1368 178 1382 200 1392 222 1403 250 1409 268 1414 285 1420 315 1435 314 1442 325 1441 335"/>
        <path d="M1515 688L1508 700 1500 706 1490 718 1475 716 1465 722 1450 717 1430 717 1425 722 1430 738 1420 745 1420 757 1410 770 1412 785 1425 793 1435 796 1440 803 1455 806 1470 810 1477 822 1465 832 1452 845 1460 855 1452 867 1440 870 1443 882 1430 885 1420 905 1405 908 1395 920 1397 932 1385 935 1375 950 1365 963 1350 960 1330 953 1310 949 1283 950 1272 960 1252 962 1245 958 1235 963 1220 957 1214 963 1208 952 1202 949 1195 958 1188 962 1185 980 1168 990 1158 993 1157 1003 1163 1018 1160 1030 1160 1050 1155 1068 1130 1075 1130 1095 1122 1108 1125 1115 1118 1131 1115 1165"/>
        <path d="M1101 646L1198 647 1202 652 1250 653 1256 649 1268 652 1285 672 1300 688 1318 695 1338 710 1345 735 1352 765 1368 779 1390 778 1410 773"/>
        <path d="M1185 647L1188 680 1200 710 1210 735 1220 743 1225 738 1232 752 1245 758 1250 768 1258 772 1262 782 1272 785 1275 795 1288 796 1300 800 1298 818 1284 825 1283 840 1290 855 1282 865 1267 860 1266 880 1275 900 1280 920 1286 940 1290 948"/>
        <path d="M746 958L744 970 733 975 731 985 745 993 755 1000 768 1010 765 1021 770 1045 780 1062 800 1072 808 1082 811 1096 908 1097 920 1108 930 1112 940 1125 935 1132 938 1142 955 1150 965 1160 985 1168 990 1158 1000 1168 1015 1174 1030 1170 1038 1158 1048 1142 1060 1137 1070 1132 1080 1137 1092 1138 1092 1150 1103 1160 1112 1165 1135 1166 1140 1175 1150 1185 1158 1200"/>
        <path d="M765 1021L748 1020 745 1030 725 1037 718 1043 700 1052 690 1062 675 1068 650 1090 635 1108 615 1122 597 1138 580 1128 558 1118 535 1128 502 1130 480 1145 460 1168 450 1185 445 1200M715 1043V1140M1118 1131H1294M1452 847H1520"/>
        <path d="M1318 951L1312 960 1318 975 1298 990 1300 1010 1298 1030 1303 1055 1301 1080 1303 1090 1287 1103 1302 1110 1294 1131 1300 1160 1310 1165 1328 1168 1330 1195"/>
      </g>
      <g class="borders" transform="translate(1180 220) scale(.47194 .33333)">
        <path d="M353 46V409H308V604M892 46L893 210 889 214 889 313M308 604H932L933 411 936 408 935 312 666 313 666 410 664 412 664 604"/>
        <path d="M1256 46L1258 210 1251 211 1250 359M1258 186H1492M936 361L1120 360 1492 358M1206 360V408L1200 409 1199 603 1197 605V845M840 604V847M377 749H840"/>
        <path d="M0 847L174 846M308 848L560 849 840 846 1100 847 1492 842M308 654V790M308 800V848"/>
        <path d="M308 848L302 862 299 885 285 890 276 900 282 912 276 928 264 935 264 960 255 985 245 1015 236 1025 228 1045 218 1050 212 1070 203 1082 200 1090V1140M174 1090L320 1090 560 1092 704 1092V1140M464 847V1090M838 847V1090L835 1092V1140M1058 847L1057 1092 1054 1094V1140M1054 1141H1240L1350 1137H1494M318 1090L320 1120 320 1140"/>
        <path d="M74 460H175L240 458 308 459M62 643L152 642 158 639 165 642 175 641 174 1090M175 653H308M57 688L70 690 82 702 100 706 105 718 115 730 130 740 150 740 165 745 174 744"/>
      </g>
      <g class="borders" transform="translate(1280 400) scale(.33333)">
        <path d="M137 80L140 66 158 65 162 55 172 48 180 50 184 38 190 42 190 62 182 60 175 75 180 80 170 68 167 82 170 95 160 88 160 108 145 115 135 112 120 122 110 115 95 112 98 122 88 127 76 122 75 113 88 112 92 95 103 88 115 85 130 92 120 98 105 98 110 103 125 98 137 88"/>
        <path d="M137 181L170 180 200 180 215 186 222 177 232 180 237 169 243 178 284 178 286 153 318 152 318 120 340 118 345 113 352 118 375 118 380 125 392 124 388 135 380 140 379 163 362 163 357 167 352 163 298 164 300 175 316 178 316 192 265 192 245 200 233 208 243 218 242 230 235 238 225 238 218 248 228 250 232 245 250 258 238 262 230 272 218 274 212 260 190 255 180 248 160 250 150 258 152 270 140 262 137 275 122 280 118 270 108 272 122 265 120 255 128 250 135 262 137 245"/>
        <circle cx="204" cy="230" r="4"/><circle cx="210" cy="248" r="4"/><circle cx="161" cy="249" r="4"/><circle cx="122" cy="272" r="5"/>
      </g>
      <g class="borders" transform="translate(570 600) scale(.42092 .33333)">
        <path d="M1158 60L1172 73 1190 66 1205 70 1212 65 1220 73 1233 72 1237 82 1228 95 1218 108 1205 122 1193 122 1195 135 1193 155 1192 180 1178 190 1186 200 1190 218 1208 225 1215 240 1222 262 1226 295 1240 310 1255 325 1268 338 1270 344"/>
        <path d="M445 60L435 68 430 76 327 118V300L25 301M715 0V411H656M327 208H715M686 498H935"/>
        <path d="M1330 55L1340 58 1362 57 1370 65 1382 70 1392 78 1388 88 1405 88 1411 95 1405 110 1418 130 1405 152 1405 170 1392 193 1410 200 1420 220 1425 232 1432 240 1425 260 1428 272 1420 285 1418 297 1405 300 1390 315 1373 331 1385 345 1400 352 1410 370 1425 385 1438 405 1450 420 1467 433M1373 331L1370 328 1358 325 1350 328 1345 345 936 343V605M1392 193L1450 192"/>
        <path d="M656 395L435 396 442 405 450 420 456 438 490 440 512 452 522 465 515 497 515 515 541 517 541 570 550 577 560 577 562 585 580 588 592 600 605 605 611 632 607 640 605 650 590 660 588 670 572 685 565 705 555 707 554 720 548 738 520 745 508 745 512 780M515 496H300L250 494H33"/>
        <path d="M656 395V411L670 435 677 450 683 480 686 500 687 525 695 538 706 543 703 555 695 578 682 580 677 590 680 600 652 602 652 618 642 632 628 640 615 638 611 632M680 600L698 612 700 640 705 655 708 680 720 682 730 690 732 703 723 712V1138"/>
        <path d="M33 646H130L132 638 380 640 392 658 402 680 430 672 445 662 455 668 475 665 490 661 502 663 510 673 530 682 545 695 555 706M33 867L90 787 390 786 430 782 723 782M723 902L880 903"/>
        <path d="M508 782L500 795 487 805 483 830 480 860 478 885 462 895 450 905 445 925 430 935 412 935 403 945 400 965 385 992 375 1012 363 1018 365 1045 358 1060 355 1080 345 1100 338 1118 330 1125 326 1138"/>
        <path d="M936 603L920 610 905 604 890 610 876 618 876 680 872 762 881 765 881 800 879 919 1063 916 1064 768 1069 767 1072 652 1060 652 1050 645 1040 645 1035 635 1020 628 1005 625 1000 618 990 612 985 602 975 602 965 598 952 605 950 598z"/>
        <path d="M1072 672L1118 673 1120 721 1450 719M1362 721L1360 940H1491L1518 912M1063 913L1360 914M1078 914L1077 1010 1090 1018 1112 1028 1116 1060 1140 1100 1166 1140"/>
      </g>
      <g class="borders" transform="translate(1180 600) scale(.47194 .33333)">
        <path d="M200 0V192M0 192L235 191 236 220 300 219 308 217 354 217M320 0V96L304 97 303 134 354 136V436H200L120 433H16M354 290L600 291 704 289 875 290 876 293 920 292 921 288 1050 287V196L1053 194 1054 0"/>
        <path d="M704 0L704 97 702 290V778H1496M704 97H836V0M1052 238L1496 237M920 292L919 390 921 391V433L1496 431M919 433L918 485 874 486V518L803 517 795 514 790 517 775 510 768 513 762 505 757 512 750 510 740 506 730 499 715 503 702 499"/>
        <path d="M962 433L961 680 959 682V778M1221 433V678L1218 682V778M312 436L311 628M269 975V1140M1090 778L1089 924 1086 928 1085 1140M0 719H150M60 912L135 822M37 940L60 912"/>
        <path d="M16 433L25 448 40 465 65 492 70 515 85 540 93 565 93 580 105 605 122 607 130 620 145 638 165 640 178 628 205 613 212 628 218 636 228 620 235 603 245 595 252 580 262 568 272 575 275 592 285 608 300 606 305 618 311 628 327 647 470 636 702 728"/>
        <path d="M145 638L143 646 155 650 161 665 158 690 150 697 152 735 142 750 140 780 134 800 137 820 155 800 170 797 182 785 195 782 212 773 228 783 245 795 256 794 252 805 246 815 260 830 262 855 263 880 272 895 278 912 265 918 265 975 285 972 300 960 318 948 330 932 355 918 378 922 425 912 440 898 450 893 452 863 472 862 482 845 508 818 510 798 530 755 547 718 585 685"/>
        <path d="M36 940L46 978 38 1000 40 1040 42 1050 36 1075 38 1090 30 1098 27 1112 35 1130 46 1140"/>
      </g>
    </svg>
  </section>
</main>

<footer class="statusbar">
  <div class="locator"><svg viewBox="0 0 16 16"><circle cx="6.500" cy="6.500" r="4.500" fill="none" stroke="#888" stroke-width="1.300"/><path d="M10 10l4 4" stroke="#888" stroke-width="1.500"/></svg><input type="text" placeholder="Type to locate (Ctrl+K)" aria-label="Locate"></div>
  <div class="status-fields">
    <label for="coord">Coordinate</label><input id="coord" class="field coord" type="text" value="-109.193,40.820">
    <button type="button" class="status-icon" aria-label="Toggle extents"><svg viewBox="0 0 16 16"><path d="M3 1c3 0 4 3 3 5s1 3 3 4M2 3l9 11M7 1l1 4M2 6l5 7" fill="none" stroke="#333" stroke-width="1.500"/><path d="M10 5l5-4" stroke="#777"/><rect x="7" y="7" width="7" height="8" rx="3" fill="#eee" stroke="#333"/><path d="M8 13l5-4" stroke="#333"/></svg></button>
    <label for="scale">Scale</label><select id="scale" class="field scale"><option>1:1278161</option></select>
    <button type="button" class="status-icon lock" aria-label="Lock scale"><svg viewBox="0 0 16 16"><path d="M4.500 8V4.500a3.500 3.500 0 0 1 7 0V8" fill="none" stroke="#888" stroke-width="2"/><rect x="2" y="7" width="12" height="9" rx="1" fill="#555"/></svg></button>
    <label for="mag">Magnifier</label><span class="spin"><input id="mag" class="field" type="text" value="100%"><span class="steps"><button type="button" aria-label="Increase magnifier"></button><button type="button" class="down" aria-label="Decrease magnifier"></button></span></span>
    <label for="rot" class="rot-label">Rotation</label><span class="spin rot"><input id="rot" class="field" type="text" value="0.0 °"><span class="steps"><button type="button" aria-label="Increase rotation"></button><button type="button" class="down" aria-label="Decrease rotation"></button></span></span>
    <label class="render"><input type="checkbox" checked>Render</label>
    <button type="button" class="crs"><svg viewBox="0 0 16 16"><circle cx="8" cy="8" r="6" fill="#aaa" stroke="#777"/><path d="M1 8h14M8 2v12M3 5h10M3 11h10M8 2C4 5 4 11 8 14M8 2c4 3 4 9 0 12" fill="none" stroke="#666"/></svg>EPSG:4269</button>
    <button type="button" class="status-icon messages" aria-label="Messages"><svg viewBox="0 0 16 16"><ellipse cx="8" cy="7" rx="7.500" ry="6" fill="#555"/><path d="M9 12l5 4-1-6z" fill="#555"/><path d="M4 7h2M7.500 7h2M11 7h2" stroke="#fff" stroke-width="1.500"/></svg></button>
  </div>
</footer>
</body>
</html>
```
FILE: styles.css
```css
* { box-sizing: border-box; }

:root {
  --window: #efebe7;
  --line: #b5b1ad;
  --field-line: #aaa6a2;
}

body {
  margin: 0;
  height: 100vh;
  display: flex;
  flex-direction: column;
  background: var(--window);
  color: #111;
  font-family: "Noto Sans", "Open Sans", sans-serif;
  font-size: 14px;
  line-height: 19px;
  overflow: hidden;
}

button, input, select { font: inherit; color: inherit; }
button { border: 0; padding: 0; background: none; }
h1, h2, ul { margin: 0; padding: 0; font-size: inherit; font-weight: 400; }
.defs { position: absolute; width: 0; height: 0; }
.serif { font-family: "Liberation Serif", serif; }

/* Window frame */
.titlebar {
  display: grid;
  grid-template-columns: 1fr auto 1fr;
  align-items: center;
  flex: none;
  height: 28px;
  background: linear-gradient(#3a3935, #4d4b45);
  color: #dfdbd2;
}
.titlebar h1 { grid-column: 2; font-weight: 700; }
.window-buttons { display: flex; justify-content: flex-end; gap: 4px; padding-right: 5px; }
.window-buttons button {
  width: 16px;
  height: 16px;
  border-radius: 50%;
  background: linear-gradient(#8f8c84, #6b6962);
}
.window-buttons .quit { background: linear-gradient(#f4764a, #df4a18); }
.window-buttons svg { display: block; }

.menubar { display: flex; flex: none; height: 22px; padding-left: 2px; border-bottom: 1px solid #d6d2ce; }
.menubar button { padding: 0 8px; }
.menubar u { text-underline-offset: 3px; }

/* Toolbars */
.toolbar {
  display: flex;
  align-items: center;
  gap: 2px;
  flex: none;
  height: 39px;
  padding-left: 2px;
  border-bottom: 1px solid var(--line);
  background: linear-gradient(#f7f4f1, #ece8e4);
}
.toolbar button {
  display: flex;
  align-items: center;
  justify-content: center;
  flex: none;
  width: 31px;
  height: 31px;
  border-radius: 3px;
}
.toolbar button svg { width: 24px; height: 24px; overflow: visible; }
.toolbar .split { width: 43px; padding-left: 4px; justify-content: flex-start; gap: 3px; }
.toolbar .pressed { background: #dad7d4; border: 1px solid #aaa6a2; }
.toolbar .framed { background: #fbfaf9; border: 1px solid #aaa6a2; }
button:disabled svg, button:disabled .arrow { opacity: .28; filter: grayscale(.7); }
.arrow { flex: none; border: 5px solid transparent; border-top: 6px solid #3c3b37; border-bottom: 0; }
.handle {
  flex: none;
  width: 14px;
  height: 20px;
  padding: 0 3px 0 7px;
  background: radial-gradient(circle, #b5b1ad 1px, transparent 1px) 0 0 / 4px 4px content-box;
}
.handle:first-child { width: 9px; padding: 0 2px 0 3px; }
.sep {
  flex: none;
  width: 5px;
  height: 20px;
  border-right: 1px solid #fff;
  background: linear-gradient(90deg, transparent 3px, #cfcbc7 3px);
}

/* Workspace */
.workspace { display: flex; flex: 1; min-height: 0; }
.panels { display: flex; flex-direction: column; flex: none; width: 541px; }
.panel { display: flex; flex-direction: column; min-height: 0; }
.browser { flex: 438 1 0; }
.layers { flex: 437 1 0; }
.panel-title { display: flex; align-items: center; gap: 6px; height: 19px; padding: 0 2px 0 4px; }
.panel-title { gap: 2px; }
.panel-title h2 { flex: 1; }
.panel-title button, .panel-title svg { display: block; width: 12px; height: 12px; }
.panel-tools { display: flex; align-items: center; gap: 9px; height: 31px; padding: 0 0 1px 8px; }
.panel-tools button { display: flex; align-items: center; gap: 4px; }
.panel-tools svg { width: 16px; height: 16px; overflow: visible; }
.panel-tools .arrow { border-width: 5px 4px 0; }
.tree {
  flex: 1;
  min-height: 0;
  overflow: hidden;
  border: 1px solid var(--line);
  background: #fff;
  list-style: none;
}
.tree li { display: flex; align-items: center; height: 19px; padding-left: 23px; }
.tree li > svg { width: 16px; height: 16px; margin-right: 2px; }
.tree li > span { height: 19px; padding: 0 3px; border: 1px solid transparent; line-height: 17px; }
.tree .branch { padding-left: 7px; }
.tree .branch::before {
  content: "";
  margin-right: 11px;
  border: 5px solid transparent;
  border-left: 5px solid #3c3b37;
  border-right: 0;
}
.tree .current > span { width: 178px; background: #e5f0f8; border-color: #a9c9dd; border-radius: 2px; }
.splitter {
  flex: none;
  height: 6px;
  padding: 1px 262px 2px;
  background: radial-gradient(circle, #b5b1ad 1px, transparent 1px) center / 3px 3px content-box;
}
.column-splitter { flex: none; width: 6px; }

input[type="checkbox"] {
  appearance: none;
  width: 13px;
  height: 13px;
  margin: 0;
  border: 1px solid var(--field-line);
  background: #fff;
}
input[type="checkbox"]:checked::before {
  content: "";
  display: block;
  width: 5px;
  height: 9px;
  margin: 0 3px;
  border: solid #111;
  border-width: 0 2px 2px 0;
  transform: rotate(35deg);
}
.legend li { height: 20px; }
.legend label { display: flex; align-items: center; }
.swatch { width: 16px; height: 16px; margin: 0 7px 0 7px; border: 1px solid #8f7635; background: #e5b636; }
.legend strong { text-decoration: underline; text-underline-offset: 3px; }

.canvas { flex: 1; min-width: 0; border: 1px solid var(--line); background: #fff; }
.map { display: block; width: 100%; height: 100%; }
.state { fill: #e5b636; stroke: #232323; vector-effect: non-scaling-stroke; }
.borders > * { fill: none; stroke: #232323; stroke-width: 1; stroke-linejoin: round; vector-effect: non-scaling-stroke; }

/* Status bar */
.statusbar {
  display: flex;
  align-items: center;
  justify-content: space-between;
  flex: none;
  height: 31px;
  padding: 0 2px 0 4px;
}
.locator {
  display: flex;
  align-items: center;
  width: 268px;
  height: 25px;
  padding-left: 7px;
  border: 1px solid var(--field-line);
  border-radius: 3px;
  background: #fff;
}
.locator svg { width: 15px; height: 15px; }
.locator input { flex: 1; min-width: 0; margin-left: 5px; padding: 0; border: 0; background: none; }
.locator input::placeholder { color: #7a7a7a; opacity: 1; }
.status-fields { display: flex; align-items: center; gap: 4px; font-size: 12px; }
.field { height: 24px; padding: 0 6px; border: 1px solid var(--field-line); border-radius: 3px; background: #fff; }
.coord { width: 105px; text-align: center; padding: 0; }
.status-icon { display: flex; width: 24px; justify-content: center; }
.status-icon svg, .crs svg { width: 16px; height: 16px; }
.scale {
  appearance: none;
  width: 96px;
  padding: 0 4px;
  background:
    conic-gradient(from -40deg at 50% 100%, #555 80deg, transparent 0) right 6px center / 8px 5px no-repeat,
    linear-gradient(var(--field-line), var(--field-line)) right 19px top / 1px 100% no-repeat,
    #fff;
  background:
    linear-gradient(to bottom right, #555 50%, transparent 50%) right 5px center / 5px 5px no-repeat,
    linear-gradient(to bottom left, #555 50%, transparent 50%) right 10px center / 5px 5px no-repeat,
    linear-gradient(var(--field-line), var(--field-line)) right 19px top / 1px 100% no-repeat,
    #fff;
}
.spin {
  display: flex;
  width: 98px;
  height: 24px;
  border: 1px solid var(--field-line);
  border-radius: 3px;
  background: #fff;
}
.spin.rot { width: 94px; }
.spin .field { flex: 1; min-width: 0; height: 22px; padding: 0 4px; border: 0; }
.steps {
  display: flex;
  flex-direction: column;
  justify-content: space-evenly;
  align-items: center;
  width: 14px;
  border-left: 1px solid var(--field-line);
}
.steps button { border: 4px solid transparent; border-bottom: 5px solid #555; border-top: 0; }
.steps .down { border-bottom: 0; border-top: 5px solid #555; }
.rot-label { margin: 0 3px 0 6px; }
.render { display: flex; align-items: center; gap: 5px; margin-left: 3px; }
.crs { display: flex; align-items: center; gap: 4px; margin-left: 14px; }
.messages { margin-left: 9px; }
```
